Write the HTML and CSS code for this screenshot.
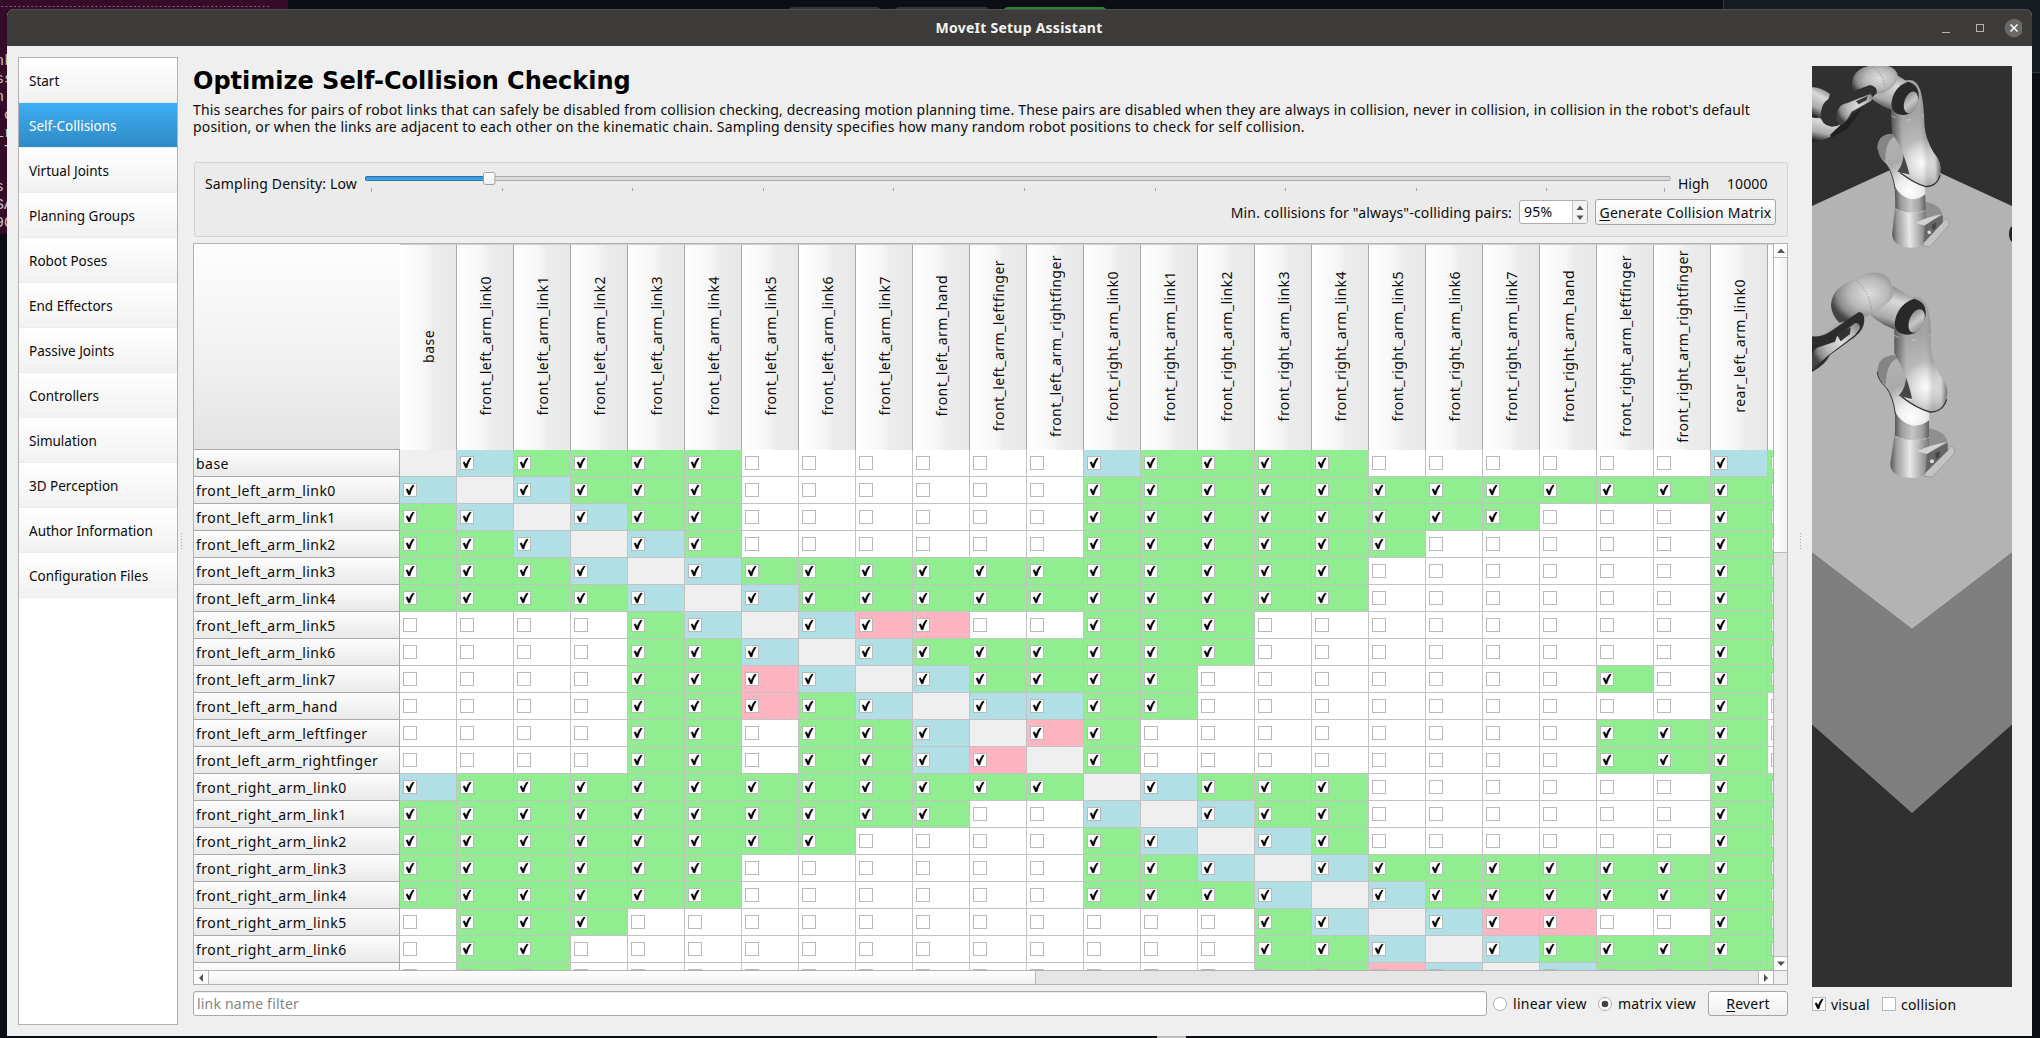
FILE: index.html
```html
<!DOCTYPE html>
<html lang="en">
<head>
<meta charset="utf-8">
<title>MoveIt Setup Assistant</title>
<link rel="stylesheet" href="styles.css">
</head>
<body>
<svg class="defs" width="0" height="0">
  <symbol id="tick" viewBox="0 0 12 12"><path d="M1.900 5.400 3.600 4.700 5.100 7.400C6 5 7 3 8.800 1L10.300 1.300C8.400 4.200 7.200 6.800 6.100 10.800L4.500 10.900Z" fill="#000" stroke="#000" stroke-width=".3"/></symbol>
</svg>
<div class="desktop">
  <div class="terminal-top">---------------------------------------------------------------</div>
  <div class="terminal">
    <span>nk</span><span>ss</span><span>n</span><span>&nbsp;c</span><span>Lr</span><span>&nbsp;T</span><span></span><span>s</span><span>SA</span><span>90</span>
  </div>
  <div class="browser-side"></div>
  <div class="tab tab-a"></div><div class="tab tab-b"></div><div class="tab tab-c"></div>
  <div class="dock"></div>

  <div class="window">
    <header class="titlebar">
      <span class="title">MoveIt Setup Assistant</span>
      <div class="controls">
        <svg width="84" height="26" viewBox="0 0 84 26">
          <path d="M4 16.500H12" stroke="#b5b4b1"/>
          <rect x="38.500" y="8.500" width="7" height="7" fill="none" stroke="#b5b4b1"/>
          <circle cx="76" cy="12" r="9.300" fill="#6a6967"/>
          <path d="M72.500 8.500 79.500 15.500M79.500 8.500 72.500 15.500" stroke="#fff" stroke-width="1.500"/>
        </svg>
      </div>
    </header>
    <div class="content">
      <nav class="sidebar">
        <a>Start</a><a class="selected">Self-Collisions</a><a>Virtual Joints</a><a>Planning Groups</a><a>Robot Poses</a><a>End Effectors</a><a>Passive Joints</a><a>Controllers</a><a>Simulation</a><a>3D Perception</a><a>Author Information</a><a>Configuration Files</a>
      </nav>
      <div class="splitter left"><i></i></div>
      <main class="main">
        <h1>Optimize Self-Collision Checking</h1>
        <p>This searches for pairs of robot links that can safely be disabled from collision checking, decreasing motion planning time. These pairs are disabled when they are always in collision, never in collision, in collision in the robot's default<br>position, or when the links are adjacent to each other on the kinematic chain. Sampling density specifies how many random robot positions to check for self collision.</p>
        <section class="group">
          <div class="row density">
            <span class="density-label">Sampling Density: Low</span>
            <svg class="slider" width="1306" height="20">
              <defs>
                <linearGradient id="fill" x2="0" y2="1"><stop stop-color="#3792d0"/><stop offset="1" stop-color="#47abf0"/></linearGradient>
                <linearGradient id="knob" x2="0" y2="1"><stop stop-color="#fff"/><stop offset="1" stop-color="#f0f0f0"/></linearGradient>
              </defs>
              <rect x=".5" y="2.500" width="1304.500" height="4" rx="1" fill="#dcdcdc" stroke="#a9a9a9"/>
              <rect x=".5" y="2.500" width="122" height="4" rx="1" fill="url(#fill)" stroke="#2874a8"/>
              <rect x="118.500" y="-1.500" width="11.500" height="12" rx="2" fill="url(#knob)" stroke="#a3a3a3"/>
              <path d="M6.500 14v4M137.500 14v3M267.500 14v3M398.500 14v3M528.500 14v3M659.500 14v3M790.500 14v3M920.500 14v3M1051.500 14v3M1181.500 14v3M1299.500 14v4" stroke="#a6a6a6"/>
            </svg>
            <span class="high">High</span><span class="count">10000</span>
          </div>
          <div class="row always">
            <span class="min">Min. collisions for "always"-colliding pairs:</span>
            <div class="spin"><span>95%</span><svg width="14" height="23"><path d="M3.500 9 7 4.500 10.500 9ZM3.500 14.500 7 19 10.500 14.500Z" fill="#555"/></svg></div>
            <button class="btn generate"><u>G</u>enerate Collision Matrix</button>
          </div>
        </section>
        <section class="table">
          <div class="viewport" id="matrix"></div>
          <div class="vbar">
            <div class="cap"><svg width="14" height="13"><path d="M3 9 7 4.500 11 9Z" fill="#555"/></svg></div>
            <div class="vthumb"></div><div class="vtrack"></div>
            <div class="cap end"><svg width="14" height="13"><path d="M3 4.500 7 9 11 4.500Z" fill="#555"/></svg></div>
          </div>
          <div class="hbar">
            <div class="hcap"><svg width="14" height="14"><path d="M9 3 5 7 9 11Z" fill="#555"/></svg></div>
            <div class="hthumb"></div><div class="htrack"></div>
            <div class="hcap end"><svg width="14" height="14"><path d="M5 3 9 7 5 11Z" fill="#555"/></svg></div>
          </div>
          <div class="corner"></div>
        </section>
        <div class="bottom">
          <div class="filter">link name filter</div>
          <svg class="radio" width="14" height="14"><circle cx="7" cy="7" r="6.500" fill="#fff" stroke="#adadad"/></svg>
          <span class="linear">linear view</span>
          <svg class="radio" width="14" height="14"><circle cx="7" cy="7" r="6.500" fill="#fff" stroke="#adadad"/><circle cx="7" cy="7" r="3.300" fill="#444"/></svg>
          <span class="matrixview">matrix view</span>
          <button class="btn revert"><u>R</u>evert</button>
        </div>
      </main>
      <div class="splitter right"><i></i></div>
      <aside class="preview">
        <svg class="scene" width="200" height="921" viewBox="0 0 200 921">
          <defs>
            <linearGradient id="cyl"><stop stop-color="#555"/><stop offset=".18" stop-color="#9a9a9a"/><stop offset=".5" stop-color="#c6c6c6"/><stop offset=".8" stop-color="#a2a2a2"/><stop offset="1" stop-color="#606060"/></linearGradient>
            <linearGradient id="basefill"><stop stop-color="#555"/><stop offset=".15" stop-color="#999"/><stop offset=".5" stop-color="#e8e8e8"/><stop offset=".75" stop-color="#b5b5b5"/><stop offset="1" stop-color="#777"/></linearGradient>
            <radialGradient id="elbow" gradientUnits="userSpaceOnUse" cx="445" cy="440" r="160"><stop stop-color="#fff"/><stop offset=".28" stop-color="#dedede"/><stop offset=".5" stop-color="#b8b8b8"/><stop offset="1" stop-color="#a4a4a4"/></radialGradient>
            <linearGradient id="edge"><stop stop-color="#000" stop-opacity=".45"/><stop offset=".22" stop-color="#000" stop-opacity="0"/><stop offset=".6" stop-color="#000" stop-opacity="0"/><stop offset=".72" stop-color="#000" stop-opacity=".12"/><stop offset=".88" stop-color="#000" stop-opacity=".06"/><stop offset="1" stop-color="#000" stop-opacity=".45"/></linearGradient>
            <radialGradient id="shoulder" gradientUnits="userSpaceOnUse" cx="395" cy="530" r="200"><stop stop-color="#fff"/><stop offset=".2" stop-color="#eee"/><stop offset=".5" stop-color="#aaa"/><stop offset="1" stop-color="#b4b4b4"/></radialGradient>
            <linearGradient id="tube" x1=".6" y1="0" x2=".3" y2="1"><stop stop-color="#888"/><stop offset=".3" stop-color="#dadada"/><stop offset=".7" stop-color="#aaa"/><stop offset="1" stop-color="#222"/></linearGradient>
            <radialGradient id="ball" cx=".6" cy=".42" r=".62"><stop stop-color="#dedede"/><stop offset=".5" stop-color="#b9b9b9"/><stop offset=".8" stop-color="#8c8c8c"/><stop offset="1" stop-color="#444"/></radialGradient>
            <linearGradient id="cap" x2="1" y2="1"><stop stop-color="#777"/><stop offset=".5" stop-color="#c8c8c8"/><stop offset="1" stop-color="#777"/></linearGradient>
            <g id="column">
              <path d="M433 697 515 618Q526 625 524 640L457 711 433 709Z" fill="#c3c3c3" stroke="#8a8a8a" stroke-width="2"/>
              <path d="M447 565Q500 575 503 610L503 632 436 700 405 690 405 640 447 610Z" fill="#8f8f8f"/>
              <path d="M345 575 447 575 447 610Q450 630 441 645L436 703Q420 714 395 714 330 712 331 670Z" fill="url(#basefill)"/>
              <path d="M441 640 503 609 503 632 436 698Z" fill="#666"/>
              <circle cx="456" cy="664" r="6" fill="#ddd"/><path d="M466 640 480 633 478 652 468 656" fill="#444"/>
              <path d="M410 634Q450 615 500 606L441 642Z" fill="#d2d2d2"/>
              <path d="M345 500H447V592Q395 612 345 588Z" fill="url(#cyl)"/>
              <path d="M345 588Q395 612 447 592" fill="none" stroke="#ddd" stroke-width="2" stroke-dasharray="12 5"/>
              <path d="M292 395Q293 348 342 345L390 400 448 500 448 540Q430 557 400 557 365 552 345 515 340 470 318 442 293 420 292 395Z" fill="url(#shoulder)"/>
              <path d="M292 395Q293 348 342 345L355 353Q318 365 317 435 293 420 292 395Z" fill="#858585"/>
              <path d="M292 395Q293 420 318 442 340 470 346 522" fill="none" stroke="#333" stroke-width="3"/>
              <path d="M356 468Q380 440 378 405L410 480Z" fill="#474747"/>
              <path d="M395 172Q430 163 443 202 454 240 453 320 455 360 480 405 510 440 500 475 487 518 450 516 405 505 358 467 390 485 397 480 388 432 365 380L343 340V230Z" fill="url(#elbow)"/>
              <path d="M395 172Q430 163 443 202 454 240 453 320 455 360 480 405 510 440 500 475 487 518 450 516 405 505 358 467 390 485 397 480 388 432 365 380L343 340V230Z" fill="url(#edge)"/>
              <path d="M365 470Q410 505 450 516 488 516 500 478" fill="none" stroke="#333" stroke-width="4"/>
              <path d="M343 286Q395 315 452 284" fill="none" stroke="#ddd" stroke-width="2" stroke-dasharray="14 40"/>
              <path d="M340 139 402 176 365 275Q310 260 270 225Z" fill="url(#tube)"/>
              <path d="M402 176Q440 185 437 225 425 285 380 284 345 282 344 250 350 195 402 176Z" fill="#292929"/>
              <ellipse cx="410" cy="243" rx="22" ry="37" transform="rotate(22 410 243)" fill="url(#cap)"/>
            </g>
          </defs>
          <rect width="200" height="921" fill="#303030"/>
          <path d="M0 480V140L100 94 200 140V480L100 556Z" fill="#b3b3b3"/>
          <path d="M0 486.500 100 563 200 486.500V658.500L100 747 0 658.500Z" fill="#7f7f7f"/>
          <path d="M0 479H200V486.500L100 563 0 486.500Z" fill="#b3b3b3"/>
          <path d="M100 563V747" stroke="#7b7b7b" stroke-width=".7"/>
          <ellipse cx="201" cy="168" rx="4" ry="8" fill="#252525"/>
          <g transform="translate(-12 -6) scale(.33333)">
            <use href="#column" transform="matrix(.891 0 .0335 .925 -40.800 -97.500)"/>
            <path d="M36 165 75 180 145 190 100 225Q70 243 36 247Z" fill="url(#tube)"/>
            <path d="M36 82Q60 80 90 102L70 165Q58 178 36 172Z" fill="url(#tube)"/>
            <path d="M155 75Q155 25 220 15 285 10 293 45 292 80 250 98L210 105 165 112Z" fill="url(#ball)"/>
            <path d="M90 225 145 172 190 143 140 208 95 233Z" fill="#202020"/>
            <path d="M62 165Q65 112 110 112L210 75Q235 80 230 100L160 163Q130 200 95 200 62 195 62 165Z" fill="#303030"/>
            <path d="M110 180Q108 135 140 130L212 101Q220 108 214 122L155 155Q135 195 120 196Z" fill="url(#ball)"/>
            <path d="M168 124 202 108 200 120 176 133Z" fill="#383838"/>
            <path d="M220 20Q252 45 254 82" fill="none" stroke="#777" stroke-width="1.500" stroke-dasharray="6 4"/>
          </g>
          <g transform="translate(-32 174) scale(.33333)">
            <use href="#column"/>
            <path d="M178 245 135 280 96 290V325H140L210 260Z" fill="#aaa"/>
            <path d="M153 195Q155 150 205 125L265 99Q330 90 340 150 342 175 320 190 290 220 240 236L178 248Q154 225 153 195Z" fill="url(#ball)"/>
            <path d="M96 289Q125 292 150 275L235 217Q252 213 253 240 252 270 225 290L150 345Q135 375 96 396Z" fill="#2c2c2c"/>
            <path d="M96 350Q98 325 120 320L165 305 170 290 225 250Q240 246 240 265L225 285 150 342Q125 362 96 390Z" fill="url(#ball)"/>
            <path d="M170 283 212 262 210 282 182 304Z" fill="#333"/>
            <path d="M228 122Q270 155 275 210" fill="none" stroke="#777" stroke-width="1.500" stroke-dasharray="6 4"/>
          </g>
        </svg>
        <div class="toggles">
          <span class="check on"><svg width="12" height="12"><use href="#tick"/></svg></span><span class="visual">visual</span>
          <span class="check"></span><span class="collision">collision</span>
        </div>
      </aside>
    </div>
  </div>
</div>
<script src="script.js"></script>
</body>
</html>
```
FILE: styles.css
```css
* { box-sizing: border-box; }
body { margin: 0; font-family: "Noto Sans", sans-serif; font-size: 14px; color: #0c0c0c; overflow: hidden; }
svg { display: block; }
.defs { position: absolute; }
.desktop { position: relative; width: 2040px; height: 1038px; background: #0b0e14; overflow: hidden; }

.terminal-top { position: absolute; left: 0; top: 0; width: 288px; height: 10px; padding-top: 3px; background: #360b28; color: #aaa; font: 7.150px/7px "Liberation Mono", monospace; white-space: nowrap; }
.terminal { position: absolute; left: 0; top: 9px; width: 7px; height: 225px; padding-top: 44px; background: #360b28; overflow: hidden; font: 15px/18px "Liberation Mono", monospace; color: #c9c0c6; white-space: nowrap; }
.terminal span { display: block; height: 18px; margin-left: -5px; }
.browser-side { position: absolute; left: 1723px; top: 0; width: 317px; height: 73px; background: #161b22; border: solid #30363d; border-width: 0 0 1px 1px; }
.tab { position: absolute; top: 7px; height: 6px; border-radius: 5px 5px 0 0; background: #30363d; }
.tab-a { left: 788px; width: 93px; }
.tab-b { left: 894px; width: 96px; }
.tab-c { left: 1003px; width: 104px; background: #238636; }
.dock { position: absolute; left: 1157px; top: 1036px; width: 29px; height: 2px; background: #bbb; }

.window { position: absolute; left: 7px; top: 9px; width: 2025px; height: 1027px; background: #efefef; border-radius: 7px 7px 0 0; overflow: hidden; }
.titlebar { height: 37px; background: #3d3b39; border-top: 1px solid #504f4c; display: flex; align-items: center; justify-content: center; padding: 0 8px 1px 93px; }
.title { flex: 1; text-align: center; color: #f4f4f2; font-weight: 700; letter-spacing: .25px; }
.controls { padding-top: 2px; padding-right: 2px; }
.content { height: 990px; display: flex; padding: 11px 20px 0 11px; }

.sidebar { width: 160px; height: 968px; border: 1px solid #b2b2b2; background: #fff; }
.sidebar a { display: block; height: 45px; padding: 0 10px; line-height: 47px; font-size: 13.500px; letter-spacing: 0; background: linear-gradient(#fff, #f1f1f1); border-bottom: 1px solid #ebebeb; white-space: nowrap; }
.sidebar .selected { background: linear-gradient(#3daef5, #308ac4); color: #fff; }
.splitter { display: flex; align-items: center; height: 968px; }
.splitter i { width: 1px; height: 16px; background: repeating-linear-gradient(#aaa 0 1px, transparent 1px 3px); }
.left { width: 15px; padding-left: 3px; }
.right { width: 24px; padding-left: 12px; }

.main { width: 1595px; display: flex; flex-direction: column; padding-top: 10px; }
h1 { margin: 0; height: 28px; font: 700 24px/28px "DejaVu Sans", sans-serif; color: #000; }
p { margin: 6px 0 27px; height: 34px; line-height: 17px; letter-spacing: .175px; white-space: nowrap; }
.group { height: 75px; margin-left: 1px; border: 1px solid #d4d4d4; border-radius: 2px; background: #ebebeb; padding: 6px 11px 0 10px; }
.row { display: flex; align-items: center; white-space: nowrap; }
.density { height: 30px; }
.density span { padding-bottom: 2px; }
.density-label { width: 152px; letter-spacing: .16px; margin-right: 8px; }
.slider { overflow: visible; }
.high { width: 49px; margin-left: 7px; }
.count { letter-spacing: .1px; }
.always { height: 26px; justify-content: flex-end; }
.min { letter-spacing: .165px; }
.spin { width: 69px; height: 24px; margin: 0 7px; display: flex; align-items: stretch; background: #fff; border: 1px solid #adadad; border-radius: 3px; overflow: hidden; line-height: 22px; }
.spin span { width: 54px; padding-left: 4px; border-right: 1px solid #c0c0c0; letter-spacing: .3px; }
.spin svg { background: #f3f3f3; }
.btn { font: inherit; color: #0c0c0c; letter-spacing: .23px; padding: 0; border: 1px solid #a5a5a5; border-radius: 3px; background: linear-gradient(#fff, #efefef); white-space: nowrap; }
.btn u { text-underline-offset: 2px; }
.generate { width: 181px; height: 26px; }

.table { height: 742px; margin: 6px 0; border: 1px solid #b2b2b2; display: grid; grid-template: 726px 14px / 1579px 14px; background: #fff; }
.viewport { overflow: hidden; display: grid; grid-template-columns: 206px repeat(25, 57px); grid-template-rows: 206px repeat(20, 27px); }
.origin { background: linear-gradient(#fdfdfd, #f0f0f0 60%, #e3e3e3); border-bottom: 1px solid #a9a9a9; }
.col { display: flex; align-items: center; justify-content: center; background: linear-gradient(90deg, #fff, #f6f6f6 45%, #ececec 60%, #e8e8e8); border-right: 1px solid #a9a9a9; border-top: 1px solid #d0d0d0; padding-bottom: 3px; }
.col span { writing-mode: vertical-rl; transform: rotate(180deg); letter-spacing: .45px; white-space: nowrap; }
.rowhead { background: linear-gradient(#fdfdfd, #e9e9e9); border: solid #a9a9a9; border-width: 0 1px 1px 0; padding-left: 2px; line-height: 28px; letter-spacing: .46px; white-space: nowrap; overflow: hidden; }
.cell { border: solid #c3c3c3; border-width: 0 1px 1px 0; padding: 6px 0 0 3px; overflow: hidden; }
.g { background: #90ee90; }
.b { background: #b0dfe6; }
.r { background: #ffb5c1; }
.x { background: #efefef; }
.check { display: block; width: 14px; height: 14px; border: 1px solid #b9b9b9; background: #fff; }

.vbar { border-left: 1px solid #b2b2b2; display: flex; flex-direction: column; }
.cap { flex: none; height: 14px; border-bottom: 1px solid #b9b9b9; background: #fdfdfd; }
.cap.end { border-top: 1px solid #b9b9b9; border-bottom: 0; }
.vthumb { flex: none; height: 295px; background: linear-gradient(90deg, #fff, #f0f0f0); border-bottom: 1px solid #b9b9b9; }
.vtrack { flex: 1; background: #e5e5e5; }
.hbar { border-top: 1px solid #b2b2b2; display: flex; }
.hcap { width: 15px; border-right: 1px solid #b9b9b9; background: #fdfdfd; }
.hcap.end { border-left: 1px solid #b9b9b9; border-right: 0; }
.hthumb { width: 827px; background: linear-gradient(#fff, #f0f0f0); border-right: 1px solid #b9b9b9; }
.htrack { flex: 1; background: #e5e5e5; }
.corner { border: solid #b2b2b2; border-width: 1px 0 0 1px; background: #efefef; }

.bottom { display: flex; align-items: center; height: 25px; white-space: nowrap; }
.filter { width: 1294px; height: 25px; border: 1px solid #a9a9a9; border-radius: 3px; background: #fff; color: #858585; padding-left: 3px; line-height: 23px; letter-spacing: .2px; box-shadow: inset 0 1px #ececec; margin-right: 6px; }
.linear { width: 85px; margin-left: 6px; letter-spacing: .3px; }
.matrixview { width: 90px; margin-left: 6px; letter-spacing: .2px; }
.revert { width: 80px; height: 25px; }

.preview { width: 200px; padding-top: 9px; }
.toggles { display: flex; align-items: center; height: 34px; }
.visual { width: 51px; margin-left: 5px; letter-spacing: .2px; }
.collision { margin-left: 5px; letter-spacing: .2px; }
```
FILE: script.js
```javascript
const arm = prefix => [0, 1, 2, 3, 4, 5, 6, 7].map(n => `${prefix}_link${n}`)
  .concat(`${prefix}_hand`, `${prefix}_leftfinger`, `${prefix}_rightfinger`);
const names = ['base', ...arm('front_left_arm'), ...arm('front_right_arm'), 'rear_left_arm_link0', ''];

// g = never in collision, b = adjacent, r = always / default, . = enabled, x = diagonal
const rows = [
  'xbgggg......bgggg......bG',
  'bxbggg......ggggggggggggG',
  'gbxbgg......gggggggg...gG',
  'ggbxbg......gggggg.....gG',
  'gggbxbggggggggggg......gG',
  'ggggbxbgggggggggg......gG',
  '....gbxbrr..ggg........gG',
  '....ggbxbgggggg........gG',
  '....ggrbxbgggg.......g.gG',
  '....ggrgbxbbgg.........g.',
  '....gg.ggbxrg........ggg.',
  '....gg.ggbrxg........ggg.',
  'bgggggggggggxbggg......gG',
  'gggggggggg..bxbgg......gG',
  'gggggggg....gbxbg......gG',
  'gggggg......ggbxbgggggggG',
  'gggggg......gggbxbggggggG',
  '.ggg...........gbxbrr..gG',
  '.gg............ggbxbggggG',
  '.gg............ggrbxbgggG'
];
const tick = '<svg width="12" height="12"><use href="#tick"/></svg>';
let html = '<div class="origin"></div>' + names.map(n => `<div class="col"><span>${n}</span></div>`).join('');
rows.forEach((row, i) => {
  html += `<div class="rowhead">${names[i]}</div>`;
  for (const c of row) {
    const box = c === 'x' ? '' : `<span class="check">${'gbr'.includes(c) ? tick : ''}</span>`;
    html += `<div class="cell ${c === '.' ? '' : c.toLowerCase()}">${box}</div>`;
  }
});
document.getElementById('matrix').innerHTML = html;
```
